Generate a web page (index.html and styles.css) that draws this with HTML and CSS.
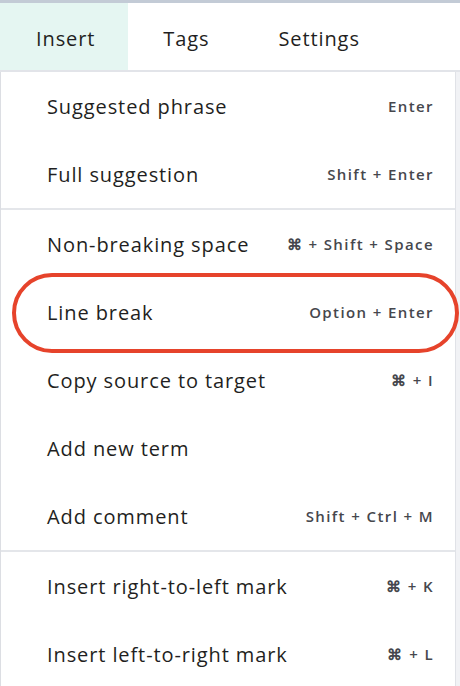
FILE: index.html
```html
<!DOCTYPE html>
<html lang="en">
<head>
    <meta charset="UTF-8">
    <title>Insert menu</title>
    <link rel="stylesheet" href="styles.css">
</head>
<body>
    <div class="tabs">
        <div class="tab active">Insert</div>
        <div class="tab">Tags</div>
        <div class="tab">Settings</div>
    </div>

    <div class="menu">
        <div class="group">
            <div class="item"><span>Suggested phrase</span><span class="key">Enter</span></div>
            <div class="item"><span>Full suggestion</span><span class="key">Shift + Enter</span></div>
        </div>
        <div class="group">
            <div class="item"><span>Non-breaking space</span><span class="key">⌘ + Shift + Space</span></div>
            <div class="item marked"><span>Line break</span><span class="key">Option + Enter</span></div>
            <div class="item"><span>Copy source to target</span><span class="key">⌘ + I</span></div>
            <div class="item"><span>Add new term</span></div>
            <div class="item"><span>Add comment</span><span class="key">Shift + Ctrl + M</span></div>
        </div>
        <div class="group">
            <div class="item"><span>Insert right-to-left mark</span><span class="key">⌘ + K</span></div>
            <div class="item"><span>Insert left-to-right mark</span><span class="key">⌘ + L</span></div>
        </div>
    </div>
</body>
</html>
```

FILE: styles.css
```css
body {
    margin: 0;
    width: 460px;
    height: 686px;
    overflow: hidden;
    font-family: "Open Sans", "Noto Sans", sans-serif;
    color: #1f1f22;
    background: #f1f2f5;
    border-top: 3px solid #c3cbd6;
    box-sizing: border-box;
}
.tabs {
    display: flex;
    height: 67px;
    background: #fff;
    border-bottom: 2px solid #e2e4e9;
}
.tab {
    display: flex;
    align-items: center;
    padding: 3px 34px 0 36px;
    font-size: 20px;
    letter-spacing: 0.9px;
}
.tab.active {
    background: #e5f6f2;
    padding-right: 33px;
}
.tab + .tab {
    padding-left: 35px;
}
.menu {
    width: 454px;
    background: #fff;
    border-left: 1px solid #dcdee3;
    border-right: 1px solid #e0e2e7;
}
.group + .group {
    border-top: 2px solid #e4e6ea;
}
.item {
    position: relative;
    display: flex;
    align-items: center;
    justify-content: space-between;
    height: 68px;
    padding: 0 21px 0 46px;
    font-size: 20px;
    letter-spacing: 0.9px;
}
.key {
    font-size: 15px;
    font-weight: 600;
    color: #46474d;
    letter-spacing: 1.4px;
}
.marked::after {
    content: "";
    position: absolute;
    left: 11px;
    right: -4px;
    top: -5px;
    bottom: -7px;
    border: 4px solid #e6432b;
    border-radius: 40px;
}
```
